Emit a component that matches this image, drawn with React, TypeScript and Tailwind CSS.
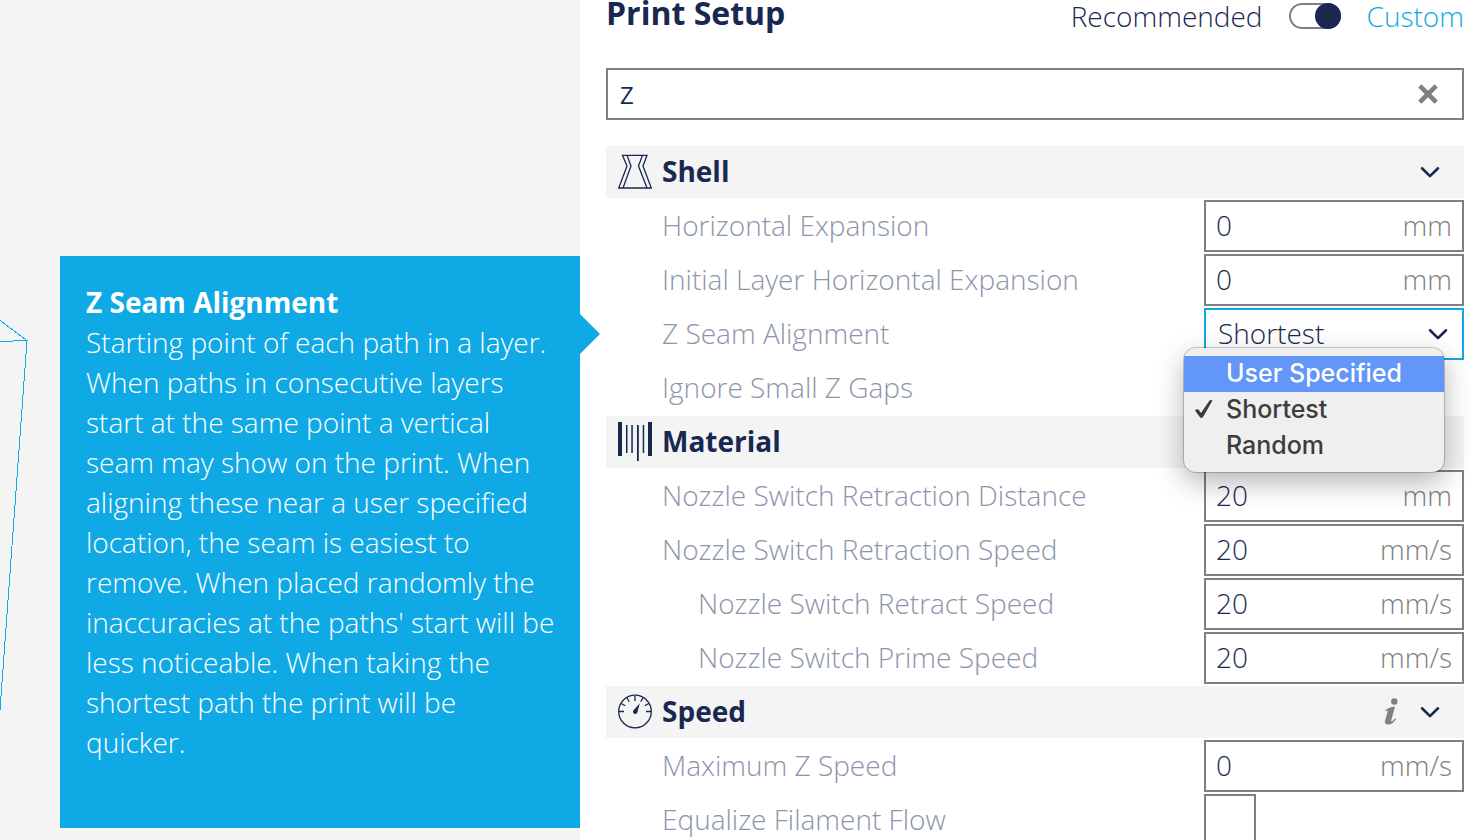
import { useState } from "react";
import type { ReactNode } from "react";
import clsx from "clsx";

type Setting = {
  id: string;
  label: string;
  kind: "number" | "select" | "checkbox";
  value?: string;
  unit?: string;
  nested?: boolean;
};

type Category = {
  id: string;
  title: string;
  icon: ReactNode;
  info?: boolean;
  settings: Setting[];
};

const seamOptions = ["User Specified", "Shortest", "Random"];

const categories: Category[] = [
  {
    id: "shell",
    title: "Shell",
    icon: <ShellIcon />,
    settings: [
      { id: "horizontal-expansion", label: "Horizontal Expansion", kind: "number", value: "0", unit: "mm" },
      { id: "initial-expansion", label: "Initial Layer Horizontal Expansion", kind: "number", value: "0", unit: "mm" },
      { id: "z-seam", label: "Z Seam Alignment", kind: "select" },
      { id: "ignore-gaps", label: "Ignore Small Z Gaps", kind: "checkbox" },
    ],
  },
  {
    id: "material",
    title: "Material",
    icon: <MaterialIcon />,
    settings: [
      { id: "switch-distance", label: "Nozzle Switch Retraction Distance", kind: "number", value: "20", unit: "mm" },
      { id: "switch-speed", label: "Nozzle Switch Retraction Speed", kind: "number", value: "20", unit: "mm/s" },
      { id: "retract-speed", label: "Nozzle Switch Retract Speed", kind: "number", value: "20", unit: "mm/s", nested: true },
      { id: "prime-speed", label: "Nozzle Switch Prime Speed", kind: "number", value: "20", unit: "mm/s", nested: true },
    ],
  },
  {
    id: "speed",
    title: "Speed",
    icon: <SpeedIcon />,
    info: true,
    settings: [
      { id: "max-z-speed", label: "Maximum Z Speed", kind: "number", value: "0", unit: "mm/s" },
      { id: "equalize-flow", label: "Equalize Filament Flow", kind: "checkbox" },
    ],
  },
];

function ShellIcon() {
  return (
    <svg viewBox="0 0 36 36" className="size-9" fill="none" stroke="currentColor" strokeWidth="1.3" aria-hidden="true">
      <path d="M5.5 1.3H30L26 12L34.3 34H1.7L10 12Z" />
      <path d="M10 1.3L14 12L6 34M25.500 1.3L21.500 12L30 34" />
    </svg>
  );
}

function MaterialIcon() {
  return (
    <svg viewBox="0 0 36 44" className="h-11 w-9" fill="currentColor" aria-hidden="true">
      <path d="M1 2h4v34H1zM31 2h4v34h-4z" />
      <path d="M9 5h1.500v28H9zM14.300 5h1.500v28h-1.500zM20 5h1.800v36H20zM25.700 5h1.500v28h-1.500z" />
    </svg>
  );
}

function SpeedIcon() {
  return (
    <svg viewBox="0 0 36 36" className="size-9" fill="none" stroke="currentColor" strokeWidth="1.3" aria-hidden="true">
      <circle cx="18" cy="17.500" r="16.300" />
      <path d="M2 17.500h5M29 17.500h5M18 2v5M4.200 9.500l4 2.300M31.800 9.500l-4 2.300M10 3.700l2.300 4M26 3.700l-2.300 4" />
      <path d="M22.800 9.300L20.300 18.800A2.300 2.300 0 1 1 16.300 16.500Z" fill="currentColor" stroke="none" />
    </svg>
  );
}

function Chevron() {
  return (
    <svg
      viewBox="0 0 20 12"
      className="h-3 w-5 text-[#192850]"
      fill="none"
      stroke="currentColor"
      strokeWidth="2.600"
      strokeLinecap="round"
      strokeLinejoin="round"
      aria-hidden="true"
    >
      <path d="M2 2.300l8 7.800L18 2.300" />
    </svg>
  );
}

function SeamSelect({ id }: { id: string }) {
  const [value, setValue] = useState("Shortest");

  return (
    <div className="relative h-13 w-65 border-2 border-[#0fa9e5] bg-white">
      <select
        id={id}
        value={value}
        onChange={(e) => setValue(e.target.value)}
        className="size-full appearance-none pb-0.5 pl-3 text-[28px] text-[#192850] outline-none"
      >
        {seamOptions.map((option) => (
          <option key={option}>{option}</option>
        ))}
      </select>
      <span className="pointer-events-none absolute inset-y-0 right-3.5 flex items-center">
        <Chevron />
      </span>

      <div className="absolute top-[38px] -left-[22px] z-10 w-65 rounded-xl bg-[#efefef] pt-2 pb-2 shadow-[0_0_0_1px_rgba(0,0,0,0.2),0_10px_28px_rgba(0,0,0,0.3)]">
        {seamOptions.map((option, i) => (
          <button
            key={option}
            type="button"
            onClick={() => setValue(option)}
            className={clsx(
              "flex h-9 w-full items-center pb-0.5 pl-2.5 font-['Inter',sans-serif] text-[25px] font-medium",
              i === 0 ? "bg-[#6296f8] text-white" : "text-[#3c3c3c]",
            )}
          >
            <span className="w-8 shrink-0">
              {option === value && (
                <svg viewBox="0 0 20 20" className="size-5" fill="currentColor" aria-hidden="true">
                  <path d="M1 11.500Q2.500 9.500 4.500 10.500L7 14L15.500 1.500Q17 .3 18.500 1.500L9 18Q7.500 20 5.800 18Z" />
                </svg>
              )}
            </span>
            {option}
          </button>
        ))}
      </div>
    </div>
  );
}

function SettingField({ setting }: { setting: Setting }) {
  if (setting.kind === "select") {
    return <SeamSelect id={setting.id} />;
  }

  if (setting.kind === "checkbox") {
    return (
      <div className="w-65">
        <input id={setting.id} type="checkbox" className="block size-13 appearance-none border-2 border-[#808080] bg-white" />
      </div>
    );
  }

  return (
    <div className="flex h-13 w-65 items-center border-2 border-[#808080] bg-white px-2.5 pb-0.5">
      <input id={setting.id} defaultValue={setting.value} className="h-full min-w-0 flex-1 text-[#192850] outline-none" />
      <span className="text-[#808080]">{setting.unit}</span>
    </div>
  );
}

function SettingCategory({ category }: { category: Category }) {
  return (
    <section className="flex flex-col gap-0.5">
      <button type="button" className="flex h-13 w-full items-center bg-[#f4f4f4] pr-6 pl-[11px] text-[#192850]">
        {category.icon}
        <h2 className="ml-[9px] pb-0.5 text-[28px] font-bold">{category.title}</h2>
        <span className="ml-auto flex items-center gap-[22px]">
          {category.info && (
            <svg viewBox="0 0 14 28" className="h-7 w-3.5 text-[#808080]" fill="currentColor" aria-hidden="true">
              <circle cx="10.300" cy="3.500" r="3.200" />
              <path d="M1.200 12.300Q5 9 11 8.700L7.200 22.500Q7.100 23.800 8.200 23.300Q9.800 22.300 11 20.300L12.200 20.900Q8.600 26.500 4 26.500Q.2 26.500 1 22.800L3.800 13Q3.900 12 1.500 13.200Z" />
            </svg>
          )}
          <Chevron />
        </span>
      </button>
      {category.settings.map((setting) => (
        <div key={setting.id} className="flex h-13 items-center justify-between">
          <label htmlFor={setting.id} className={clsx("pb-0.5 text-[#8c95aa]", setting.nested ? "pl-[92px]" : "pl-14")}>
            {setting.label}
          </label>
          <SettingField setting={setting} />
        </div>
      ))}
    </section>
  );
}

function SettingTooltip() {
  return (
    <div role="tooltip" className="relative mt-64 ml-[60px] bg-[#0fa9e5] pt-[26px] pr-6 pb-[66px] pl-[26px] text-white">
      <h3 className="font-bold">Z Seam Alignment</h3>
      <p>
        Starting point of each path in a layer. When paths in consecutive layers start at the same point a vertical seam
        may show on the print. When aligning these near a user specified location, the seam is easiest to remove. When
        placed randomly the inaccuracies at the paths' start will be less noticeable. When taking the shortest path the
        print will be quicker.
      </p>
      <svg viewBox="0 0 20 40" className="absolute top-[58px] left-full h-10 w-5 text-[#0fa9e5]" aria-hidden="true">
        <path d="M0 0L20 20L0 40Z" fill="currentColor" />
      </svg>
    </div>
  );
}

export default function App() {
  const [custom, setCustom] = useState(true);
  const [query, setQuery] = useState("Z");

  return (
    <div className="flex h-screen overflow-hidden bg-white font-['Open_Sans',sans-serif] text-[28px] leading-10 font-light">
      <aside className="relative w-[580px] shrink-0 bg-[#f4f4f4]">
        <svg
          viewBox="0 0 30 400"
          className="absolute top-80 left-0 h-[400px] w-[30px]"
          fill="none"
          stroke="#0fa9e5"
          shapeRendering="crispEdges"
          aria-hidden="true"
        >
          <path d="M0 .5L27 20.500L0 21.500M27 20.500L0 390" />
        </svg>
        <SettingTooltip />
      </aside>

      <main className="flex min-w-0 flex-1 flex-col pr-3 pl-[26px]">
        <header className="flex h-[68px] shrink-0 items-start justify-between">
          <h1 className="text-[32px] leading-[26px] font-bold text-[#192850]">Print Setup</h1>
          <div className="flex items-center gap-[26px] leading-8 text-[#192850]">
            <span>Recommended</span>
            <button
              type="button"
              role="switch"
              aria-checked={custom}
              aria-label="Custom print setup"
              onClick={() => setCustom(!custom)}
              className={clsx(
                "flex h-[26px] w-13 items-center rounded-full border-2 border-[#808080] bg-white",
                custom && "justify-end",
              )}
            >
              <span className="-mx-0.5 size-[26px] shrink-0 rounded-full bg-[#192850]" />
            </button>
            <span className="text-[#0fa9e5]">Custom</span>
          </div>
        </header>

        <div className="flex h-13 shrink-0 items-center border-2 border-[#808080] pr-6 pl-3">
          <input
            aria-label="Search settings"
            value={query}
            onChange={(e) => setQuery(e.target.value)}
            className="h-full min-w-0 flex-1 text-[24px] font-normal text-[#192850] outline-none"
          />
          <button type="button" aria-label="Clear search" onClick={() => setQuery("")}>
            <svg viewBox="0 0 20 20" className="size-5 text-[#808080]" stroke="currentColor" strokeWidth="4.600" aria-hidden="true">
              <path d="M1.800 1.800L18.200 18.200M18.200 1.800L1.800 18.200" />
            </svg>
          </button>
        </div>

        <div className="mt-[26px] flex flex-col gap-0.5">
          {categories.map((category) => (
            <SettingCategory key={category.id} category={category} />
          ))}
        </div>
      </main>
    </div>
  );
}
